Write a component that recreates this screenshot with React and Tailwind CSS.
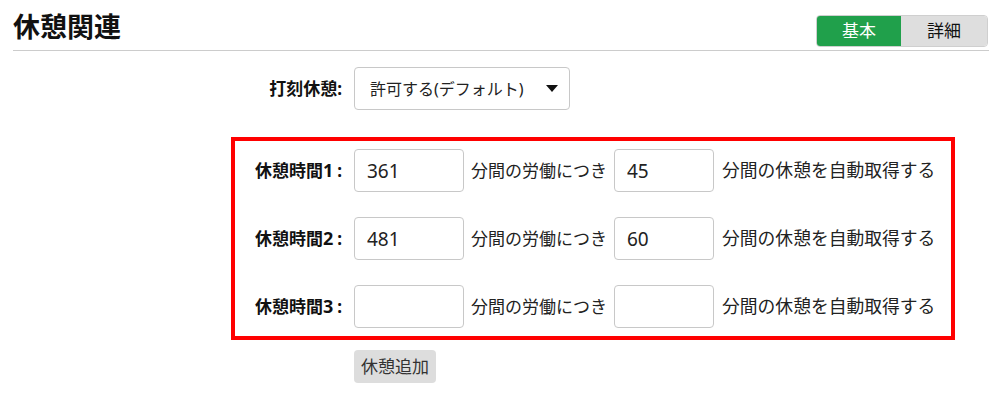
import { useState } from 'react';

const font = { fontFamily: '"Noto Sans", "Noto Sans CJK JP", sans-serif' };

const BreakRow = ({ no, work, rest }) => (
  <div className="flex items-center h-[43px]">
    <div className="w-[119px] pr-[12px] text-right text-[17px] font-bold text-[#111]">
      休憩時間<span className="text-[18px]">{no}</span>
      <span className="ml-[4px]">:</span>
    </div>
    <input
      type="text"
      defaultValue={work}
      className="w-[110px] h-[43px] px-[12px] text-[19px] text-[#222] border border-[#c8c8c8] rounded-[4px] outline-none"
    />
    <span className="ml-[7px] text-[17px] text-[#222]">分間の労働につき</span>
    <input
      type="text"
      defaultValue={rest}
      className="ml-[7px] w-[100px] h-[43px] px-[12px] text-[19px] text-[#222] border border-[#c8c8c8] rounded-[4px] outline-none"
    />
    <span className="ml-[8px] text-[17.8px] text-[#222]">分間の休憩を自動取得する</span>
  </div>
);

const App = () => {
  const [mode, setMode] = useState('basic');

  const rows = [
    { no: '1', work: '361', rest: '45' },
    { no: '2', work: '481', rest: '60' },
    { no: '3', work: '', rest: '' }
  ];

  return (
    <div className="w-[1008px] h-[404px] bg-white overflow-hidden" style={font}>
      <div className="ml-[13px] w-[976px]">
        {/* 見出し */}
        <div className="flex items-start justify-between h-[51px] border-b border-[#cccccc]">
          <h1 className="mt-[11px] text-[27px] leading-[32px] font-bold text-[#111]">休憩関連</h1>
          <div className="flex h-[32px] mt-[15px] mr-[1px] rounded-[4px] border border-[#cfcfcf] overflow-hidden text-[17px]">
            <button
              onClick={() => setMode('basic')}
              className={`w-[84px] ${mode === 'basic' ? 'bg-[#20a04b] text-white' : 'bg-[#dedede] text-[#111]'}`}
            >
              基本
            </button>
            <button
              onClick={() => setMode('detail')}
              className={`w-[86px] ${mode === 'detail' ? 'bg-[#20a04b] text-white' : 'bg-[#dedede] text-[#111]'}`}
            >
              詳細
            </button>
          </div>
        </div>

        {/* 打刻休憩 */}
        <div className="flex items-center mt-[16px]">
          <div className="w-[341px] pr-[12px] text-right text-[17px] font-bold text-[#111]">打刻休憩:</div>
          <div className="flex items-center justify-between w-[216px] h-[43px] pl-[15px] pr-[11px] border border-[#c8c8c8] rounded-[4px] text-[16px] text-[#222]">
            <span>許可する(デフォルト)</span>
            <svg width="12" height="7" viewBox="0 0 12 7">
              <path d="M0 0H12L6 7Z" fill="#111" />
            </svg>
          </div>
        </div>

        {/* 休憩時間 */}
        <div className="ml-[218px] mt-[27px] w-[724px] border-4 border-[#ff0000] py-[8px] flex flex-col gap-[25px]">
          {rows.map((r) => (
            <BreakRow key={r.no} {...r} />
          ))}
        </div>

        <button className="ml-[341px] mt-[10px] h-[33px] px-[7px] rounded-[4px] bg-[#dddddd] text-[17px] text-[#333]">
          休憩追加
        </button>
      </div>
    </div>
  );
};

export default App;
